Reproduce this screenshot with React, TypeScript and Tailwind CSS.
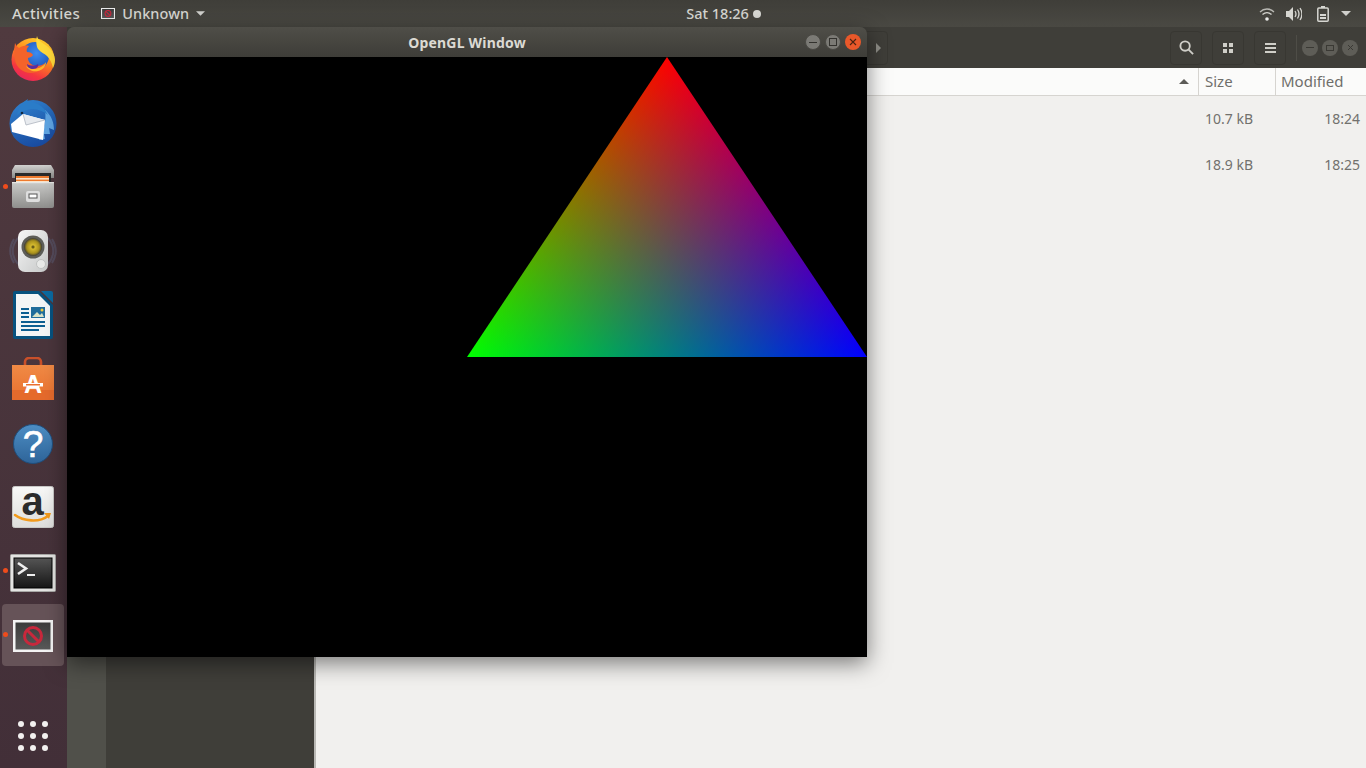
import React from "react";

const uiFont = "font-['Noto_Sans','Open_Sans',sans-serif]";

function Firefox() {
  return (
    <svg width="44" height="45" viewBox="0 0 44 45">
      <defs>
        <linearGradient id="ffBody" x1="0.8" y1="0" x2="0.3" y2="1">
          <stop offset="0" stopColor="#ffd52e" />
          <stop offset="0.45" stopColor="#ff8a1f" />
          <stop offset="0.8" stopColor="#f5363f" />
          <stop offset="1" stopColor="#e8265e" />
        </linearGradient>
        <radialGradient id="ffGlobe" cx="0.55" cy="0.4" r="0.7">
          <stop offset="0" stopColor="#3d8cf0" />
          <stop offset="0.7" stopColor="#2461c4" />
          <stop offset="1" stopColor="#3b2a9a" />
        </radialGradient>
      </defs>
      <circle cx="22" cy="23.5" r="21.5" fill="url(#ffBody)" />
      <circle cx="24" cy="20" r="14" fill="url(#ffGlobe)" />
      <path d="M26 0c1 5 6 7 10 10 5 4 8 9 8 14 0 3-1 6-2 8-1-5-3-9-6-12-3-3-8-4-10-9-1-4-1-8 0-11z" fill="#ffd93a" />
      <path d="M4 7c1 2 2 4 4 5 3-2 7-3 10-2-2 2-3 4-2 6 3 0 5 1 6 3-1 2-3 2-5 3 0 4 3 7 8 8 4 0 7-1 9-3-2 6-8 10-14 10C12 37 5 31 4 24 3 18 3 13 4 7z" fill="#f4632a" />
      <path d="M15 30c4 3 10 4 15 1 2-1 4-3 5-5 0 4-3 8-8 9-5 1-10-1-12-5z" fill="#ffb52a" />
      <path d="M16 28c3 2 8 2 11 0 1 2-1 5-5 5-3 0-6-2-6-5z" fill="#5b2ea0" />
    </svg>
  );
}

function Thunderbird() {
  return (
    <svg width="48" height="48" viewBox="0 0 48 48">
      <defs>
        <linearGradient id="tbBody" x1="0.3" y1="0" x2="0.7" y2="1">
          <stop offset="0" stopColor="#2f7fcc" />
          <stop offset="1" stopColor="#17489e" />
        </linearGradient>
      </defs>
      <circle cx="24" cy="24.5" r="23.5" fill="url(#tbBody)" />
      <path d="M36 11c7 6 9 13 9 20l-5-2 1 6-6 0 1 5-6 1c3-6 8-16 6-30z" fill="#5ea4e2" />
      <path d="M8 16C10 7 15 2 19 0l-1 3c7-1 16 3 21 13-6-5-12-6-17-6-5 1-10 3-14 6z" fill="#2a7cc8" />
      <circle cx="13" cy="14" r="1.3" fill="#10273f" />
      <path d="M2 25L14 15l22 6-2 20-31-8z" fill="#ffffff" />
      <path d="M14 15l3 11 19-5" fill="#e8ebef" stroke="#aeb5bf" strokeWidth="0.8" />
    </svg>
  );
}

function FileCabinet() {
  return (
    <svg width="42" height="43" viewBox="0 0 42 43">
      <defs>
        <linearGradient id="fcFront" x1="0" y1="0" x2="0" y2="1">
          <stop offset="0" stopColor="#c8c8c6" />
          <stop offset="1" stopColor="#8f8f8d" />
        </linearGradient>
        <linearGradient id="fcTop" x1="0" y1="0" x2="0" y2="1">
          <stop offset="0" stopColor="#d2d2d0" />
          <stop offset="1" stopColor="#8b8b89" />
        </linearGradient>
      </defs>
      <path d="M3 0h36l3 5v8H0V5z" fill="url(#fcTop)" />
      <rect x="3" y="8" width="36" height="10" fill="#2a2a2a" />
      <rect x="4" y="11" width="33" height="8" fill="#ee7a2e" />
      <rect x="4" y="13" width="33" height="1.6" fill="#fbe3c8" />
      <rect x="4" y="16" width="33" height="1.4" fill="#fbe3c8" />
      <path d="M0 18h42v23a2 2 0 0 1-2 2H2a2 2 0 0 1-2-2z" fill="url(#fcFront)" />
      <rect x="0" y="17" width="42" height="1.2" fill="#e6e6e4" />
      <rect x="14" y="26" width="14" height="11" rx="2" fill="#dedede" />
      <rect x="17" y="29" width="8" height="4" fill="#fff" stroke="#555" strokeWidth="1" />
    </svg>
  );
}

function Speaker() {
  return (
    <svg width="48" height="44" viewBox="0 0 48 44">
      <defs>
        <linearGradient id="spBox" x1="0" y1="0" x2="1" y2="1">
          <stop offset="0" stopColor="#f6f6f6" />
          <stop offset="1" stopColor="#c6c8c8" />
        </linearGradient>
        <radialGradient id="spCone">
          <stop offset="0" stopColor="#3a3410" />
          <stop offset="0.25" stopColor="#d4b92e" />
          <stop offset="0.7" stopColor="#a8901c" />
          <stop offset="1" stopColor="#3b3a34" />
        </radialGradient>
      </defs>
      <g fill="none" stroke="#6a7fa8" strokeWidth="2" opacity="0.28">
        <path d="M9 9c-7 8-7 18 0 26" />
        <path d="M5 10c-5 8-5 16 0 24" />
        <path d="M39 9c7 8 7 18 0 26" />
        <path d="M43 10c5 8 5 16 0 24" />
      </g>
      <rect x="9" y="1" width="30" height="42" rx="7" fill="url(#spBox)" />
      <circle cx="24" cy="18" r="11.5" fill="#5d5d58" />
      <circle cx="24" cy="18" r="9" fill="url(#spCone)" />
      <circle cx="32" cy="35" r="4.5" fill="#e8e9e8" stroke="#c0c2c2" />
    </svg>
  );
}

function Writer() {
  return (
    <svg width="40" height="48" viewBox="0 0 40 48">
      <path d="M2 0h24l14 14v32a2 2 0 0 1-2 2H2a2 2 0 0 1-2-2V2a2 2 0 0 1 2-2z" fill="#07527f" />
      <path d="M28 0h10a2 2 0 0 1 2 2v10z" fill="#0b6aa0" />
      <path d="M3 3h22l12 12v30H3z" fill="#f3f5f6" />
      <g fill="#0c5e91">
        <rect x="8" y="17" width="8" height="2" />
        <rect x="8" y="21" width="8" height="2" />
        <rect x="8" y="25" width="8" height="2" />
        <rect x="8" y="30" width="24" height="2" />
        <rect x="8" y="34" width="24" height="2" />
        <rect x="8" y="38" width="18" height="2" />
      </g>
      <rect x="18" y="16" width="14" height="11" fill="#1f6c9b" />
      <path d="M19 26l5-5 3 3 2-2 2 4z" fill="#d9e2c6" />
      <circle cx="29" cy="19" r="1.5" fill="#efc93f" />
    </svg>
  );
}

function SoftwareBag() {
  return (
    <svg width="42" height="43" viewBox="0 0 42 43">
      <defs>
        <linearGradient id="bag" x1="0" y1="0" x2="0" y2="1">
          <stop offset="0" stopColor="#f08a45" />
          <stop offset="1" stopColor="#e9702f" />
        </linearGradient>
      </defs>
      <path d="M13 9V5a4 4 0 0 1 4-4h8a4 4 0 0 1 4 4v4" fill="none" stroke="#c9502a" strokeWidth="2.6" />
      <rect x="0" y="8" width="42" height="35" fill="url(#bag)" />
      <rect x="0" y="33" width="42" height="10" fill="#e56a2c" />
      <text x="21" y="36" textAnchor="middle" fontFamily="Liberation Sans, sans-serif" fontWeight="700" fontSize="25" fill="#fff">A</text>
      <rect x="11" y="26" width="20" height="3.5" fill="#fff" />
      <rect x="14" y="27" width="14" height="1.5" fill="#e9702f" />
    </svg>
  );
}

function HelpIcon() {
  return (
    <svg className="overflow-visible" width="40" height="40" viewBox="0 0 40 40">
      <defs>
        <linearGradient id="helpBg" x1="0" y1="0" x2="0" y2="1">
          <stop offset="0" stopColor="#4d8ec4" />
          <stop offset="1" stopColor="#2e6499" />
        </linearGradient>
      </defs>
      <circle cx="20" cy="20" r="19.5" fill="url(#helpBg)" stroke="#1f4e7c" />
      <text x="20" y="33" textAnchor="middle" fontFamily="Liberation Sans, sans-serif" fontSize="37" stroke="#fff" strokeWidth="0.6" fill="#fff">?</text>
    </svg>
  );
}

function Amazon() {
  return (
    <svg className="overflow-visible" width="42" height="42" viewBox="0 0 42 42">
      <defs>
        <linearGradient id="amz" x1="0" y1="0" x2="0" y2="1">
          <stop offset="0" stopColor="#f8f8f7" />
          <stop offset="1" stopColor="#dededc" />
        </linearGradient>
      </defs>
      <rect x="0.5" y="0.5" width="41" height="41" rx="2" fill="url(#amz)" stroke="#c8c8c6" />
      <text x="20.5" y="29" textAnchor="middle" fontFamily="Liberation Sans, sans-serif" fontWeight="700" fontSize="40" fill="#2b2b2b">a</text>
      <path d="M3 29c8 6 24 8 33 1" fill="none" stroke="#f29a1c" strokeWidth="2.6" strokeLinecap="round" />
      <path d="M32 27l7 0-2 6z" fill="#f29a1c" />
    </svg>
  );
}

function Terminal() {
  return (
    <svg width="46" height="38" viewBox="0 0 46 38">
      <defs>
        <linearGradient id="termBg" x1="0" y1="0" x2="0" y2="1">
          <stop offset="0" stopColor="#555555" />
          <stop offset="1" stopColor="#161616" />
        </linearGradient>
      </defs>
      <rect x="0.5" y="0.5" width="45" height="37" rx="1" fill="#e4e4e2" stroke="#a8a8a6" />
      <rect x="4" y="4" width="38" height="30" fill="url(#termBg)" stroke="#000" />
      <path d="M8 9l8 5.5-8 5.5" fill="none" stroke="#eee" strokeWidth="2.6" />
      <rect x="17" y="20" width="8" height="2" fill="#eee" />
    </svg>
  );
}

function NoEntryFrame({ small }: { small?: boolean }) {
  const size = small ? "w-[14px] h-[11px]" : "w-[40px] h-[32px]";
  return (
    <svg className={size} viewBox="0 0 40 32">
      <defs>
        <linearGradient id={small ? "noBgS" : "noBg"} x1="0" y1="0" x2="0" y2="1">
          <stop offset="0" stopColor="#3a3a3a" />
          <stop offset="1" stopColor="#5a5a5a" />
        </linearGradient>
      </defs>
      <rect x="1.25" y="1.25" width="37.5" height="29.5" fill={small ? "url(#noBgS)" : "url(#noBg)"} stroke="#f4f4f4" strokeWidth={small ? 3 : 2.5} />
      <circle cx="20" cy="16" r="8.5" fill="none" stroke="#c8283c" strokeWidth="3" />
      <path d="M14 10l12 12" stroke="#c8283c" strokeWidth="3" />
    </svg>
  );
}

const dockIcons: { key: string; node: React.ReactNode; nudge?: string; running?: boolean; active?: boolean }[] = [
  { key: "firefox", node: <Firefox /> },
  { key: "thunderbird", node: <Thunderbird /> },
  { key: "files", node: <FileCabinet />, running: true },
  { key: "rhythmbox", node: <Speaker /> },
  { key: "writer", node: <Writer /> },
  { key: "software", node: <SoftwareBag /> },
  { key: "help", node: <HelpIcon />, nudge: "top-[1px]" },
  { key: "amazon", node: <Amazon /> },
  { key: "terminal", node: <Terminal />, nudge: "top-[2px]", running: true },
  { key: "unknown", node: <NoEntryFrame />, nudge: "top-[1px]", running: true, active: true },
];

function Dock() {
  return (
    <aside className="w-[67px] shrink-0 flex flex-col bg-gradient-to-b from-[#503a3f] to-[#422f38]">
      {dockIcons.map((item) => (
        <div key={item.key} className="relative h-[64px] pr-[1px] pb-[1px] flex items-center justify-center">
          {item.active && <div className="absolute left-[2px] top-[1px] w-[62px] h-[62px] rounded-[4px] bg-[#665358]" />}
          {item.running && <div className="absolute left-[3px] top-[29px] w-[5px] h-[5px] rounded-full bg-[#ef4c1c]" />}
          <div className={`relative flex ${item.nudge ?? ""}`}>{item.node}</div>
        </div>
      ))}
      <div className="mt-auto mb-[17px] ml-[18px] grid grid-cols-3 gap-x-[6px] gap-y-[6px] w-[30px]">
        {Array.from({ length: 9 }).map((_, i) => (
          <div key={i} className="w-[6px] h-[6px] rounded-full bg-[#f2f0ef]" />
        ))}
      </div>
    </aside>
  );
}

function TopBar() {
  return (
    <header className={`h-[27px] shrink-0 flex items-center bg-gradient-to-b from-[#3f3e39] to-[#4a4943] font-medium text-[#d6d6d1] ${uiFont}`}>
      <span className="ml-[12px] text-[15px] tracking-[0.35px]">Activities</span>
      <span className="ml-[21px] flex"><NoEntryFrame small /></span>
      <span className="ml-[7px] text-[14.5px] tracking-[0.1px]">Unknown</span>
      <svg className="ml-[7px]" width="9" height="5" viewBox="0 0 10 5"><path d="M0 0h10L5 5z" fill="#d0d0cc" /></svg>
      <span className="ml-[481px] text-[14.5px]">Sat 18:26</span>
      <span className="ml-[4px] w-[8px] h-[8px] rounded-full bg-[#d8d8d4]" />
      <svg className="ml-[498px]" width="16" height="14" viewBox="0 0 16 14" fill="none" stroke="#d6d6d1">
        <path d="M1 5c4-4 10-4 14 0" strokeWidth="1.3" opacity="0.8" />
        <path d="M3.5 7.5c3-2.5 6-2.5 9 0" strokeWidth="1.3" />
        <circle cx="8" cy="12" r="1.8" fill="#ececea" stroke="none" />
      </svg>
      <svg className="ml-[11px]" width="16" height="14" viewBox="0 0 16 14" fill="none" stroke="#d6d6d1">
        <path d="M0 4h3l4-4v14l-4-4H0z" fill="#d6d6d1" stroke="none" />
        <path d="M9 4c1.3 2 1.3 4 0 6M11.5 2.5c2 3 2 6 0 9M14 1c2.6 4 2.6 8 0 12" strokeWidth="1.3" />
      </svg>
      <svg className="ml-[15px]" width="12" height="16" viewBox="0 0 12 16">
        <rect x="0.8" y="2" width="10.4" height="13.2" rx="1" fill="none" stroke="#d6d6d1" strokeWidth="1.5" />
        <rect x="4" y="0" width="4" height="2" fill="#d6d6d1" />
        <rect x="3" y="8" width="6" height="2" fill="#d6d6d1" />
        <rect x="3" y="11" width="6" height="2" fill="#d6d6d1" />
      </svg>
      <svg className="ml-[12px]" width="10" height="5" viewBox="0 0 10 5"><path d="M0 0h10L5 5z" fill="#d0d0cc" /></svg>
    </header>
  );
}

function ToolButton({ children }: { children: React.ReactNode }) {
  return (
    <div className="w-[32px] h-[34px] rounded-[4px] border border-[#383732] flex items-center justify-center">
      {children}
    </div>
  );
}

function FileManager() {
  return (
    <section className={`flex-1 min-w-0 flex flex-col bg-[#f1f0ee] ${uiFont}`}>
      <div className="h-[41px] shrink-0 flex items-center bg-[#3f3e39]">
        <div className="ml-[790px] w-[31px] h-[34px] rounded-[4px] border border-[#383732] flex items-center justify-end pr-[6px]">
          <svg width="5" height="10" viewBox="0 0 5 10"><path d="M0 0l5 5-5 5z" fill="#8e8d87" /></svg>
        </div>
        <div className="ml-auto flex items-center gap-[10px]">
          <ToolButton>
            <svg width="15" height="15" viewBox="0 0 16 16" fill="none" stroke="#cfcec8" strokeWidth="2">
              <circle cx="6.5" cy="6.5" r="5" />
              <path d="M10 10l5 5" />
            </svg>
          </ToolButton>
          <ToolButton>
            <svg width="10" height="10" viewBox="0 0 10 10" fill="#cfcec8">
              <rect width="4" height="4" />
              <rect x="6" width="4" height="4" />
              <rect y="6" width="4" height="4" />
              <rect x="6" y="6" width="4" height="4" />
            </svg>
          </ToolButton>
          <ToolButton>
            <svg width="11" height="10" viewBox="0 0 11 10" fill="#cfcec8">
              <rect width="11" height="2" />
              <rect y="4" width="11" height="2" />
              <rect y="8" width="11" height="2" />
            </svg>
          </ToolButton>
        </div>
        <div className="ml-[10px] w-px h-[26px] bg-[#4e4d47]" />
        <div className="ml-[5px] mr-[8px] flex items-center gap-[4px]">
          <div className="w-[16px] h-[16px] rounded-full bg-[#5e5d57] flex items-center justify-center">
            <div className="w-[8px] h-px bg-[#3a3934]" />
          </div>
          <div className="w-[16px] h-[16px] rounded-full bg-[#5e5d57] flex items-center justify-center">
            <div className="w-[8px] h-[6px] border border-[#3a3934]" />
          </div>
          <div className="w-[16px] h-[16px] rounded-full bg-[#5e5d57] flex items-center justify-center">
            <svg width="7" height="7" viewBox="0 0 7 7"><path d="M1 1l5 5M6 1L1 6" stroke="#3a3934" /></svg>
          </div>
        </div>
      </div>
      <div className="flex-1 min-h-0 flex">
        <div className="w-[39px] shrink-0 bg-[#50504a]" />
        <div className="w-[208px] shrink-0 bg-[#3f3e39]" />
        <div className="w-[2px] shrink-0 bg-[#b9b8b4]" />
        <div className="flex-1 min-w-0 flex flex-col">
          <div className="h-[28px] shrink-0 flex items-stretch bg-[#fbfbfa] border-b border-[#d6d4d0] text-[15px] text-[#6f6e6a]">
            <div className="flex-1 flex items-center justify-end pr-[9px]">
              <svg width="10" height="5" viewBox="0 0 10 5"><path d="M0 5h10L5 0z" fill="#5c5b57" /></svg>
            </div>
            <div className="w-[77px] border-l border-[#d6d4d0] pl-[6px] flex items-center">Size</div>
            <div className="w-[91px] border-l border-[#d6d4d0] pl-[5px] flex items-center">Modified</div>
          </div>
          {[
            { size: "10.7 kB", time: "18:24" },
            { size: "18.9 kB", time: "18:25" },
          ].map((row) => (
            <div key={row.time} className="h-[46px] shrink-0 pb-[2px] flex items-center text-[14px] text-[#72716d]">
              <div className="flex-1" />
              <div className="w-[77px] pl-[7px]">{row.size}</div>
              <div className="w-[91px] pr-[6px] text-right">{row.time}</div>
            </div>
          ))}
        </div>
      </div>
    </section>
  );
}

function RgbTriangle() {
  return (
    <svg className="isolate block" width="800" height="600" viewBox="0 0 800 600">
      <defs>
        <linearGradient id="triR" gradientUnits="userSpaceOnUse" x1="600" y1="0" x2="600" y2="300">
          <stop offset="0" stopColor="#ff0000" />
          <stop offset="1" stopColor="#000000" />
        </linearGradient>
        <linearGradient id="triG" gradientUnits="userSpaceOnUse" x1="400" y1="300" x2="676.9" y2="115.4">
          <stop offset="0" stopColor="#00ff00" />
          <stop offset="1" stopColor="#000000" />
        </linearGradient>
        <linearGradient id="triB" gradientUnits="userSpaceOnUse" x1="800" y1="300" x2="523.1" y2="115.4">
          <stop offset="0" stopColor="#0000ff" />
          <stop offset="1" stopColor="#000000" />
        </linearGradient>
      </defs>
      <polygon points="600,0 400,300 800,300" fill="url(#triR)" className="mix-blend-plus-lighter" />
      <polygon points="600,0 400,300 800,300" fill="url(#triG)" className="mix-blend-plus-lighter" />
      <polygon points="600,0 400,300 800,300" fill="url(#triB)" className="mix-blend-plus-lighter" />
    </svg>
  );
}

function GlWindow() {
  return (
    <div className={`absolute left-[67px] top-[27px] w-[800px] flex flex-col rounded-t-[7px] overflow-hidden shadow-[0_6px_22px_rgba(0,0,0,0.5)] ${uiFont}`}>
      <div className="relative h-[30px] flex items-center justify-center bg-gradient-to-b from-[#4f4e48] to-[#3e3d38]">
        <span className="text-[14px] font-bold tracking-[0.2px] text-[#dcdad3]">OpenGL Window</span>
        <div className="absolute right-[6px] top-[7px] flex gap-[4px]">
          <div className="w-[16px] h-[16px] rounded-full bg-[#7b7a75] border border-[#4a4944] flex items-center justify-center">
            <div className="w-[8px] h-px bg-[#33322e]" />
          </div>
          <div className="w-[16px] h-[16px] rounded-full bg-[#7b7a75] border border-[#4a4944] flex items-center justify-center">
            <div className="w-[8px] h-[8px] border border-[#33322e]" />
          </div>
          <div className="w-[16px] h-[16px] rounded-full bg-[#e9582a] flex items-center justify-center">
            <svg width="8" height="8" viewBox="0 0 8 8"><path d="M1 1l6 6M7 1L1 7" stroke="#4a2312" strokeWidth="1.1" /></svg>
          </div>
        </div>
      </div>
      <div className="h-[600px] bg-black">
        <RgbTriangle />
      </div>
    </div>
  );
}

export default function App() {
  return (
    <div className="relative w-[1366px] h-[768px] overflow-hidden flex flex-col">
      <TopBar />
      <div className="flex-1 min-h-0 flex">
        <Dock />
        <FileManager />
      </div>
      <GlWindow />
    </div>
  );
}
